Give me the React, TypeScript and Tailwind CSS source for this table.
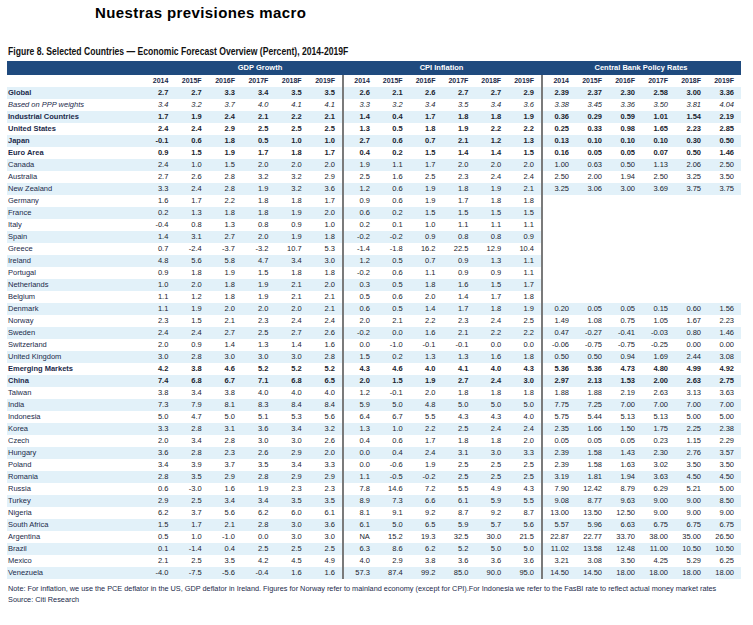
import React from "react";

type Row = {
  name: string;
  style?: "bold" | "italic";
  gdp: string[];
  cpi: string[];
  cb?: string[];
};

const years = ["2014", "2015F", "2016F", "2017F", "2018F", "2019F"];

const rows: Row[] = [
  { name: "Global", style: "bold", gdp: ["2.7", "2.7", "3.3", "3.4", "3.5", "3.5"], cpi: ["2.6", "2.1", "2.6", "2.7", "2.7", "2.9"], cb: ["2.39", "2.37", "2.30", "2.58", "3.00", "3.36"] },
  { name: "Based on PPP weights", style: "italic", gdp: ["3.4", "3.2", "3.7", "4.0", "4.1", "4.1"], cpi: ["3.3", "3.2", "3.4", "3.5", "3.4", "3.6"], cb: ["3.38", "3.45", "3.36", "3.50", "3.81", "4.04"] },
  { name: "Industrial Countries", style: "bold", gdp: ["1.7", "1.9", "2.4", "2.1", "2.2", "2.1"], cpi: ["1.4", "0.4", "1.7", "1.8", "1.8", "1.9"], cb: ["0.36", "0.29", "0.59", "1.01", "1.54", "2.19"] },
  { name: "United States", style: "bold", gdp: ["2.4", "2.4", "2.9", "2.5", "2.5", "2.5"], cpi: ["1.3", "0.5", "1.8", "1.9", "2.2", "2.2"], cb: ["0.25", "0.33", "0.98", "1.65", "2.23", "2.85"] },
  { name: "Japan", style: "bold", gdp: ["-0.1", "0.6", "1.8", "0.5", "1.0", "1.0"], cpi: ["2.7", "0.6", "0.7", "2.1", "1.2", "1.3"], cb: ["0.13", "0.10", "0.10", "0.10", "0.30", "0.50"] },
  { name: "Euro Area", style: "bold", gdp: ["0.9", "1.5", "1.9", "1.7", "1.8", "1.7"], cpi: ["0.4", "0.2", "1.5", "1.4", "1.4", "1.5"], cb: ["0.16", "0.05", "0.05", "0.07", "0.50", "1.46"] },
  { name: "Canada", gdp: ["2.4", "1.0", "1.5", "2.0", "2.0", "2.0"], cpi: ["1.9", "1.1", "1.7", "2.0", "2.0", "2.0"], cb: ["1.00", "0.63", "0.50", "1.13", "2.06", "2.50"] },
  { name: "Australia", gdp: ["2.7", "2.6", "2.8", "3.2", "3.2", "2.9"], cpi: ["2.5", "1.6", "2.5", "2.3", "2.4", "2.4"], cb: ["2.50", "2.00", "1.94", "2.50", "3.25", "3.50"] },
  { name: "New Zealand", gdp: ["3.3", "2.4", "2.8", "1.9", "3.2", "3.6"], cpi: ["1.2", "0.6", "1.9", "1.8", "1.9", "2.1"], cb: ["3.25", "3.06", "3.00", "3.69", "3.75", "3.75"] },
  { name: "Germany", gdp: ["1.6", "1.7", "2.2", "1.8", "1.8", "1.7"], cpi: ["0.9", "0.6", "1.9", "1.7", "1.8", "1.8"] },
  { name: "France", gdp: ["0.2", "1.3", "1.8", "1.8", "1.9", "2.0"], cpi: ["0.6", "0.2", "1.5", "1.5", "1.5", "1.5"] },
  { name: "Italy", gdp: ["-0.4", "0.8", "1.3", "0.8", "0.9", "1.0"], cpi: ["0.2", "0.1", "1.0", "1.1", "1.1", "1.1"] },
  { name: "Spain", gdp: ["1.4", "3.1", "2.7", "2.0", "1.9", "1.8"], cpi: ["-0.2", "-0.2", "0.9", "0.8", "0.8", "0.9"] },
  { name: "Greece", gdp: ["0.7", "-2.4", "-3.7", "-3.2", "10.7", "5.3"], cpi: ["-1.4", "-1.8", "16.2", "22.5", "12.9", "10.4"] },
  { name: "Ireland", gdp: ["4.8", "5.6", "5.8", "4.7", "3.4", "3.0"], cpi: ["1.2", "0.5", "0.7", "0.9", "1.3", "1.1"] },
  { name: "Portugal", gdp: ["0.9", "1.8", "1.9", "1.5", "1.8", "1.8"], cpi: ["-0.2", "0.6", "1.1", "0.9", "0.9", "1.1"] },
  { name: "Netherlands", gdp: ["1.0", "2.0", "1.8", "1.9", "2.1", "2.0"], cpi: ["0.3", "0.5", "1.8", "1.6", "1.5", "1.7"] },
  { name: "Belgium", gdp: ["1.1", "1.2", "1.8", "1.9", "2.1", "2.1"], cpi: ["0.5", "0.6", "2.0", "1.4", "1.7", "1.8"] },
  { name: "Denmark", gdp: ["1.1", "1.9", "2.0", "2.0", "2.0", "2.1"], cpi: ["0.6", "0.5", "1.4", "1.7", "1.8", "1.9"], cb: ["0.20", "0.05", "0.05", "0.15", "0.60", "1.56"] },
  { name: "Norway", gdp: ["2.3", "1.5", "2.1", "2.3", "2.4", "2.4"], cpi: ["2.0", "2.1", "2.2", "2.3", "2.4", "2.5"], cb: ["1.49", "1.08", "0.75", "1.05", "1.67", "2.23"] },
  { name: "Sweden", gdp: ["2.4", "2.4", "2.7", "2.5", "2.7", "2.6"], cpi: ["-0.2", "0.0", "1.6", "2.1", "2.2", "2.2"], cb: ["0.47", "-0.27", "-0.41", "-0.03", "0.80", "1.46"] },
  { name: "Switzerland", gdp: ["2.0", "0.9", "1.4", "1.3", "1.4", "1.6"], cpi: ["0.0", "-1.0", "-0.1", "-0.1", "0.0", "0.0"], cb: ["-0.06", "-0.75", "-0.75", "-0.25", "0.00", "0.00"] },
  { name: "United Kingdom", gdp: ["3.0", "2.8", "3.0", "3.0", "3.0", "2.8"], cpi: ["1.5", "0.2", "1.3", "1.3", "1.6", "1.8"], cb: ["0.50", "0.50", "0.94", "1.69", "2.44", "3.08"] },
  { name: "Emerging Markets", style: "bold", gdp: ["4.2", "3.8", "4.6", "5.2", "5.2", "5.2"], cpi: ["4.3", "4.6", "4.0", "4.1", "4.0", "4.3"], cb: ["5.36", "5.36", "4.73", "4.80", "4.99", "4.92"] },
  { name: "China", style: "bold", gdp: ["7.4", "6.8", "6.7", "7.1", "6.8", "6.5"], cpi: ["2.0", "1.5", "1.9", "2.7", "2.4", "3.0"], cb: ["2.97", "2.13", "1.53", "2.00", "2.63", "2.75"] },
  { name: "Taiwan", gdp: ["3.8", "3.4", "3.8", "4.0", "4.0", "4.0"], cpi: ["1.2", "-0.1", "2.0", "1.8", "1.8", "1.8"], cb: ["1.88", "1.88", "2.19", "2.63", "3.13", "3.63"] },
  { name: "India", gdp: ["7.3", "7.9", "8.1", "8.3", "8.4", "8.4"], cpi: ["5.9", "5.0", "4.8", "5.0", "5.0", "5.0"], cb: ["7.75", "7.25", "7.00", "7.00", "7.00", "7.00"] },
  { name: "Indonesia", gdp: ["5.0", "4.7", "5.0", "5.1", "5.3", "5.6"], cpi: ["6.4", "6.7", "5.5", "4.3", "4.3", "4.0"], cb: ["5.75", "5.44", "5.13", "5.13", "5.00", "5.00"] },
  { name: "Korea", gdp: ["3.3", "2.8", "3.1", "3.6", "3.4", "3.2"], cpi: ["1.3", "1.0", "2.2", "2.5", "2.4", "2.4"], cb: ["2.35", "1.66", "1.50", "1.75", "2.25", "2.38"] },
  { name: "Czech", gdp: ["2.0", "3.4", "2.8", "3.0", "3.0", "2.6"], cpi: ["0.4", "0.6", "1.7", "1.8", "1.8", "2.0"], cb: ["0.05", "0.05", "0.05", "0.23", "1.15", "2.29"] },
  { name: "Hungary", gdp: ["3.6", "2.8", "2.3", "2.6", "2.9", "2.0"], cpi: ["0.0", "0.4", "2.4", "3.1", "3.0", "3.3"], cb: ["2.39", "1.58", "1.43", "2.30", "2.76", "3.57"] },
  { name: "Poland", gdp: ["3.4", "3.9", "3.7", "3.5", "3.4", "3.3"], cpi: ["0.0", "-0.6", "1.9", "2.5", "2.5", "2.5"], cb: ["2.39", "1.58", "1.63", "3.02", "3.50", "3.50"] },
  { name: "Romania", gdp: ["2.8", "3.5", "2.9", "2.8", "2.9", "2.9"], cpi: ["1.1", "-0.5", "-0.2", "2.5", "2.5", "2.5"], cb: ["3.19", "1.81", "1.94", "3.63", "4.50", "4.50"] },
  { name: "Russia", gdp: ["0.6", "-3.0", "1.6", "1.9", "2.3", "2.3"], cpi: ["7.8", "14.6", "7.2", "5.5", "4.9", "4.3"], cb: ["7.90", "12.42", "8.79", "6.29", "5.21", "5.00"] },
  { name: "Turkey", gdp: ["2.9", "2.5", "3.4", "3.4", "3.5", "3.5"], cpi: ["8.9", "7.3", "6.6", "6.1", "5.9", "5.5"], cb: ["9.08", "8.77", "9.63", "9.00", "9.00", "8.50"] },
  { name: "Nigeria", gdp: ["6.2", "3.7", "5.6", "6.2", "6.0", "6.1"], cpi: ["8.1", "9.1", "9.2", "8.7", "9.2", "8.7"], cb: ["13.00", "13.50", "12.50", "9.00", "9.00", "9.00"] },
  { name: "South Africa", gdp: ["1.5", "1.7", "2.1", "2.8", "3.0", "3.6"], cpi: ["6.1", "5.0", "6.5", "5.9", "5.7", "5.6"], cb: ["5.57", "5.96", "6.63", "6.75", "6.75", "6.75"] },
  { name: "Argentina", gdp: ["0.5", "1.0", "-1.0", "0.0", "3.0", "3.0"], cpi: ["NA", "15.2", "19.3", "32.5", "30.0", "21.5"], cb: ["22.87", "22.77", "33.70", "38.00", "35.00", "26.50"] },
  { name: "Brazil", gdp: ["0.1", "-1.4", "0.4", "2.5", "2.5", "2.5"], cpi: ["6.3", "8.6", "6.2", "5.2", "5.0", "5.0"], cb: ["11.02", "13.58", "12.48", "11.00", "10.50", "10.50"] },
  { name: "Mexico", gdp: ["2.1", "2.5", "3.5", "4.2", "4.5", "4.9"], cpi: ["4.0", "2.9", "3.8", "3.6", "3.6", "3.6"], cb: ["3.21", "3.08", "3.50", "4.25", "5.29", "6.25"] },
  { name: "Venezuela", gdp: ["-4.0", "-7.5", "-5.6", "-0.4", "1.6", "1.6"], cpi: ["57.3", "87.4", "99.2", "85.0", "90.0", "95.0"], cb: ["14.50", "14.50", "18.00", "18.00", "18.00", "18.00"] },
];

const Cells = ({ values }: { values: string[] }) => (
  <>
    {values.map((v, i) => (
      <div key={i} className="text-right pr-[7px]">
        {v}
      </div>
    ))}
  </>
);

const TableRow = ({ row, shaded }: { row: Row; shaded: boolean }) => {
  const tone =
    row.style === "bold"
      ? "font-bold"
      : row.style === "italic"
        ? "italic"
        : "";
  const bg = shaded ? "bg-[#e2f1f9]" : "";
  return (
    <div className={`flex h-[12px] items-center leading-[12px] ${tone}`}>
      <div className={`w-[135px] h-full pl-[1px] text-[#1b2a4a] ${bg}`}>
        {row.name}
      </div>
      <div className={`w-[200px] h-full grid grid-cols-6 text-[#20242e] ${bg}`}>
        <Cells values={row.gdp} />
      </div>
      <div
        className={`w-[199px] h-full grid grid-cols-6 border-l-2 border-[#7a7a7a] text-[#20242e] ${bg}`}
      >
        <Cells values={row.cpi} />
      </div>
      <div
        className={`w-[200px] h-full grid grid-cols-6 border-l-2 border-[#7a7a7a] text-[#20242e] ${
          row.cb ? bg : ""
        }`}
      >
        {row.cb && <Cells values={row.cb} />}
      </div>
    </div>
  );
};

export default function App() {
  return (
    <div className="w-[753px] h-[625px] bg-white font-['Liberation_Sans',Arial,sans-serif] text-black overflow-hidden">
      {/* Title */}
      <div className="pt-[4px] pl-[95px] text-[15px] leading-[18px] font-bold tracking-[0.4px] text-black">
        Nuestras previsiones macro
      </div>

      {/* Figure caption */}
      <div className="mt-[22px] pl-[8px] h-[12px] leading-[12px] whitespace-nowrap">
        <span className="inline-block origin-left scale-x-[0.86] text-[10px] font-bold text-[#111]">
          Figure 8. Selected Countries — Economic Forecast Overview (Percent), 2014-2019F
        </span>
      </div>

      {/* Table */}
      <div className="mt-[5px] ml-[7px] w-[734px] text-[7.5px]">
        <div className="flex h-[14px] items-center bg-[#1f4a7e] text-white font-bold text-[7.5px]">
          <div className="w-[135px]" />
          <div className="w-[200px] text-center pl-[36px]">GDP Growth</div>
          <div className="w-[199px] text-center">CPI Inflation</div>
          <div className="w-[200px] text-center">Central Bank Policy Rates</div>
        </div>

        <div className="flex h-[12px] items-center leading-[12px] font-bold text-[7px] text-[#1b2a4a]">
          <div className="w-[135px] h-full" />
          <div className="w-[200px] h-full grid grid-cols-6">
            <Cells values={years} />
          </div>
          <div className="w-[199px] h-full grid grid-cols-6 border-l-2 border-[#7a7a7a]">
            <Cells values={years} />
          </div>
          <div className="w-[200px] h-full grid grid-cols-6 border-l-2 border-[#7a7a7a]">
            <Cells values={years} />
          </div>
        </div>

        {rows.map((row, i) => (
          <TableRow key={row.name} row={row} shaded={i % 2 === 0} />
        ))}
      </div>

      {/* Notes */}
      <div className="mt-[4px] pl-[8px] text-[7.5px] leading-[11px] text-[#1b2a4a] whitespace-nowrap">
        <div className="origin-left scale-x-[0.975]">
          Note: For inflation, we use the PCE deflator in the US, GDP deflator in Ireland. Figures for Norway refer to mainland economy (except for CPI).For Indonesia we refer to the FasBI rate to reflect actual money market rates
        </div>
        <div className="origin-left scale-x-[0.975]">Source: Citi Research</div>
      </div>
    </div>
  );
}
